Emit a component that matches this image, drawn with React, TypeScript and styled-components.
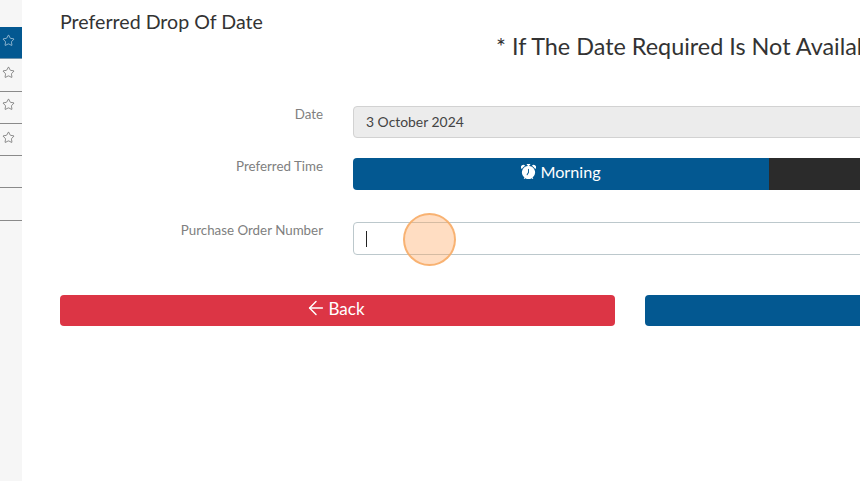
import React from 'react'
import styled, { createGlobalStyle } from 'styled-components'
import { BsAlarmFill } from 'react-icons/bs'
import { ArrowLeft, Star } from 'lucide-react'

const GlobalStyle = createGlobalStyle`
  html, body {
    margin: 0;
    padding: 0;
    background: #fff;
  }
  body {
    font-family: 'Lato', 'Liberation Sans', sans-serif;
    overflow: hidden;
  }
`
const Page = styled.div`
  position: relative;
  display: flex;
  width: 860px;
  height: 481px;
  overflow: hidden;
`
const Sidebar = styled.nav`
  flex: none;
  width: 22px;
  padding-top: 27px;
  background-color: #f6f6f6;
`
const SideItem = styled.div<{ $active?: boolean }>`
  display: flex;
  height: 32.3px;
  padding: 0 0 5px 2px;
  align-items: center;
  box-sizing: border-box;
  color: ${p => (p.$active ? '#fff' : '#333')};
  background-color: ${p => (p.$active ? '#035891' : 'transparent')};
  border-bottom: 1px solid ${p => (p.$active ? '#6f93ad' : '#8a8a8a')};
`
const Main = styled.main`
  flex: none;
  width: 1140px;
  padding-left: 38px;
`
const Title = styled.h4`
  margin: 0;
  padding-top: 10px;
  font-size: 19.6px;
  line-height: 24px;
  font-weight: 400;
  color: #333;
`
const Notice = styled.h3`
  margin: 0;
  padding: 0 0 0 436px;
  font-size: 23.4px;
  line-height: 24px;
  font-weight: 400;
  color: #333;
  white-space: nowrap;
`
const Form = styled.form`
  display: flex;
  flex-direction: column;
  padding-top: 48px;
`
const Row = styled.div<{ $gap: number }>`
  display: grid;
  grid-template-columns: 263px 832px;
  column-gap: 30px;
  margin-bottom: ${p => p.$gap}px;
`
const Label = styled.label`
  text-align: right;
  font-size: 13.35px;
  line-height: 16px;
  color: #808080;
`
const ReadOnly = styled.div`
  height: 32px;
  padding: 0 12px;
  box-sizing: border-box;
  font-size: 13.9px;
  line-height: 29px;
  color: #444;
  background-color: #ececec;
  border: 1px solid #d2d2d2;
  border-radius: 4px;
`
const TextInput = styled.div`
  display: flex;
  height: 33px;
  padding-left: 12px;
  align-items: center;
  box-sizing: border-box;
  background-color: #fff;
  border: 1px solid #bcc8cc;
  border-radius: 4px;
`
const Caret = styled.span`
  width: 1px;
  height: 16px;
  background-color: #222;
`
const Toggle = styled.div`
  display: grid;
  height: 32px;
  grid-template-columns: 1fr 1fr;
  border-radius: 4px;
  overflow: hidden;
`
const ToggleOption = styled.div<{ $on?: boolean }>`
  display: flex;
  gap: 4px;
  padding-bottom: 5px;
  box-sizing: border-box;
  justify-content: center;
  align-items: center;
  font-size: 16.2px;
  color: #fff;
  background-color: ${p => (p.$on ? '#035891' : '#2b2b2b')};
`
const Actions = styled.div`
  display: grid;
  grid-template-columns: 555px 555px;
  column-gap: 30px;
  padding-top: 7px;
`
const ActionButton = styled.button<{ $tone: string }>`
  display: flex;
  height: 31px;
  gap: 1px;
  justify-content: center;
  align-items: center;
  padding: 0 5px 5px 0;
  font-family: inherit;
  font-size: 17px;
  color: #fff;
  background-color: ${p => p.$tone};
  border: none;
  border-radius: 4px;
`
const ClickMarker = styled.div`
  position: absolute;
  left: 403px;
  top: 213px;
  width: 53px;
  height: 53px;
  box-sizing: border-box;
  background-color: rgba(255, 166, 94, 0.38);
  border: 2px solid rgba(247, 170, 100, 0.85);
  border-radius: 50%;
`

export default function App() {
  return (
    <Page>
      <GlobalStyle />
      <Sidebar>
        <SideItem $active><Star size={13} strokeWidth={1} /></SideItem>
        <SideItem><Star size={13} strokeWidth={1} /></SideItem>
        <SideItem><Star size={13} strokeWidth={1} /></SideItem>
        <SideItem><Star size={13} strokeWidth={1} /></SideItem>
        <SideItem />
        <SideItem />
      </Sidebar>
      <Main>
        <Title>Preferred Drop Of Date</Title>
        <Notice>* If The Date Required Is Not Available Please Contact Us</Notice>
        <Form>
          <Row $gap={20}>
            <Label>Date</Label>
            <ReadOnly>3 October 2024</ReadOnly>
          </Row>
          <Row $gap={32}>
            <Label>Preferred Time</Label>
            <Toggle>
              <ToggleOption $on><BsAlarmFill size={15} />Morning</ToggleOption>
              <ToggleOption><BsAlarmFill size={15} />Afternoon</ToggleOption>
            </Toggle>
          </Row>
          <Row $gap={33}>
            <Label>Purchase Order Number</Label>
            <TextInput><Caret /></TextInput>
          </Row>
          <Actions>
            <ActionButton $tone="#dc3545"><ArrowLeft size={22} strokeWidth={1.6} />Back</ActionButton>
            <ActionButton $tone="#035891">Next</ActionButton>
          </Actions>
        </Form>
      </Main>
      <ClickMarker />
    </Page>
  )
}
